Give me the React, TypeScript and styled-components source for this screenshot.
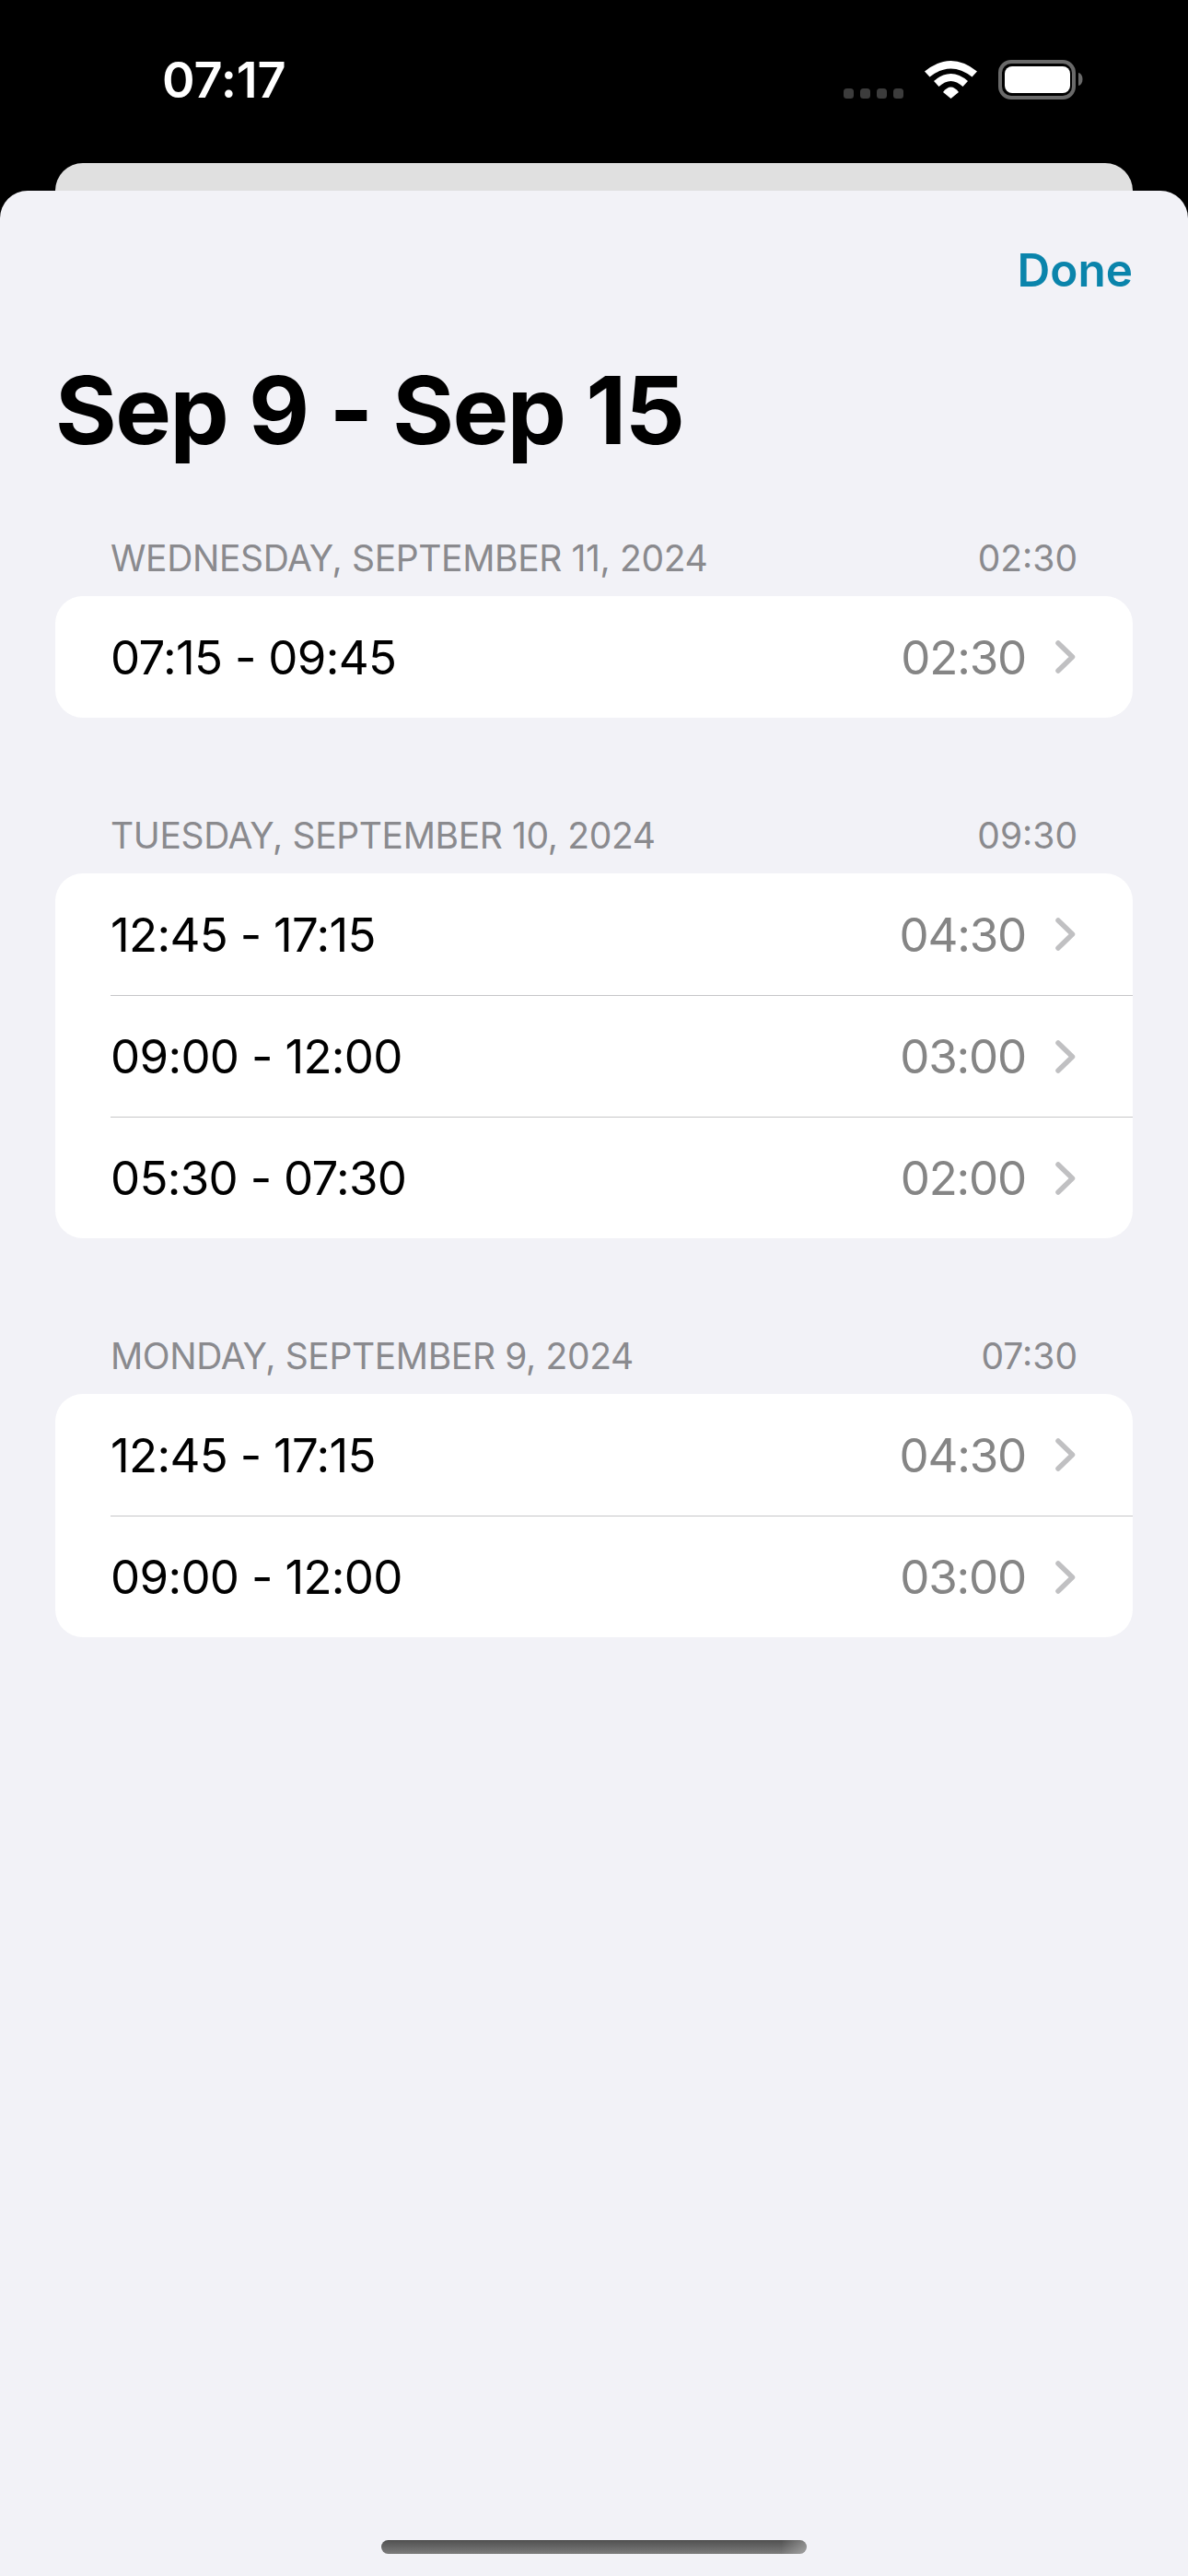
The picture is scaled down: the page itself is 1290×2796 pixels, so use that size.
import React from "react";
import styled, { createGlobalStyle } from "styled-components";

const Global = createGlobalStyle`
  html, body { margin: 0; padding: 0; background: #000; }
  body { font-family: Inter, "Liberation Sans", sans-serif; }
`;

const Screen = styled.div`
  width: 1290px;
  height: 2796px;
  background: #000;
  display: flex;
  flex-direction: column;
  overflow: hidden;
  position: relative;
`;

const StatusBar = styled.div`
  height: 177px;
  flex: none;
  display: flex;
  align-items: flex-start;
  justify-content: space-between;
  box-sizing: border-box;
  padding: 60px 113px 0 176px;
`;

const Clock = styled.div`
  color: #fff;
  font-size: 54px;
  font-weight: 600;
  line-height: 54px;
  letter-spacing: -0.1px;
`;

const StatusIcons = styled.svg`
  display: block;
  margin-top: 5px;
  flex: none;
`;

const BackSheet = styled.div`
  height: 40px;
  flex: none;
  margin: 0 60px -10px;
  background: #e0e0e0;
  border-radius: 30px 30px 0 0;
`;

const Sheet = styled.div`
  flex: 1;
  position: relative;
  background: #f2f2f7;
  border-radius: 30px 30px 0 0;
  box-sizing: border-box;
  padding: 0 60px;
  display: flex;
  flex-direction: column;
`;

const TopBar = styled.div`
  height: 115px;
  display: flex;
  align-items: flex-end;
  justify-content: flex-end;
`;

const Done = styled.button`
  border: 0;
  background: none;
  padding: 0;
  font: 600 49.5px/58px Inter, "Liberation Sans", sans-serif;
  color: #0a84ab;
`;

const Title = styled.h1`
  margin: 63px 0 0;
  font-size: 102px;
  font-weight: 700;
  line-height: 120px;
  letter-spacing: -1.5px;
  color: #000;
`;

const Sections = styled.div`
  margin-top: 78px;
  display: flex;
  flex-direction: column;
  gap: 105px;
`;

const SectionHeader = styled.div`
  height: 64px;
  box-sizing: border-box;
  padding: 0 60px;
  display: flex;
  justify-content: space-between;
  align-items: flex-start;
  font-size: 39px;
  line-height: 46px;
  color: #8a8a8e;
`;

const DateLabel = styled.span`
  letter-spacing: -0.37px;
`;

const Card = styled.div`
  background: #fff;
  border-radius: 30px;
  overflow: hidden;
`;

const Row = styled.div`
  height: 132px;
  box-sizing: border-box;
  margin-left: 60px;
  padding-right: 62px;
  display: flex;
  align-items: center;
  & + & {
    border-top: 1px solid #c6c6c8;
  }
`;

const Range = styled.div`
  flex: 1;
  font-size: 51px;
  letter-spacing: -0.7px;
  color: #000;
`;

const Duration = styled.div`
  font-size: 51px;
  letter-spacing: -1.2px;
  color: #858585;
  margin-right: 32px;
`;

const Chevron = styled.svg`
  display: block;
  flex: none;
`;

const HomeBar = styled.div`
  position: absolute;
  left: 414px;
  top: 2757px;
  width: 462px;
  height: 15px;
  border-radius: 8px;
  background: linear-gradient(to right, rgba(255, 255, 255, 0) 94%, rgba(255, 255, 255, 0.3)),
    linear-gradient(180deg, #505050, #7c7c7c);
`;

type Entry = { range: string; duration: string };
type Section = { date: string; total: string; entries: Entry[] };

const data: Section[] = [
  { date: "WEDNESDAY, SEPTEMBER 11, 2024", total: "02:30", entries: [{ range: "07:15 - 09:45", duration: "02:30" }] },
  {
    date: "TUESDAY, SEPTEMBER 10, 2024",
    total: "09:30",
    entries: [
      { range: "12:45 - 17:15", duration: "04:30" },
      { range: "09:00 - 12:00", duration: "03:00" },
      { range: "05:30 - 07:30", duration: "02:00" },
    ],
  },
  {
    date: "MONDAY, SEPTEMBER 9, 2024",
    total: "07:30",
    entries: [
      { range: "12:45 - 17:15", duration: "04:30" },
      { range: "09:00 - 12:00", duration: "03:00" },
    ],
  },
];

export default function App() {
  return (
    <Screen>
      <Global />
      <StatusBar>
        <Clock>07:17</Clock>
        <StatusIcons width="261" height="43" viewBox="0 0 261 43">
          <g fill="#3c3c3c">
            <rect x="0" y="31" width="11" height="11" rx="3.5" />
            <rect x="18" y="31" width="11" height="11" rx="3.5" />
            <rect x="36" y="31" width="11" height="11" rx="3.5" />
            <rect x="54" y="31" width="11" height="11" rx="3.5" />
          </g>
          <g fill="#fff">
            <path d="M88 12.5 Q116.5 -10.5 145 12.5 L139.5 18.5 Q116.5 0.5 93.5 18.5 Z" />
            <path d="M98 23 Q116.5 7 135 23 L129.5 29 Q116.5 17 103.5 29 Z" />
            <path d="M108 35 Q116.5 24 125 35 L116.5 42 Z" />
          </g>
          <rect x="170" y="2" width="80" height="39" rx="12" fill="none" stroke="#6a6a6a" strokeWidth="4" />
          <rect x="175" y="7" width="71" height="29" rx="8" fill="#fff" />
          <path d="M255 14 C 261 15, 261 27, 255 28 Z" fill="#6a6a6a" />
        </StatusIcons>
      </StatusBar>
      <BackSheet />
      <Sheet>
        <TopBar>
          <Done>Done</Done>
        </TopBar>
        <Title>Sep 9 - Sep 15</Title>
        <Sections>
          {data.map((s) => (
            <div key={s.date}>
              <SectionHeader>
                <DateLabel>{s.date}</DateLabel>
                <span>{s.total}</span>
              </SectionHeader>
              <Card>
                {s.entries.map((e) => (
                  <Row key={e.range}>
                    <Range>{e.range}</Range>
                    <Duration>{e.duration}</Duration>
                    <Chevron width="22" height="36" viewBox="0 0 22 36">
                      <path d="M3 3 L18.5 18 L3 33" fill="none" stroke="#c0c0c2" strokeWidth="5.5" strokeLinecap="round" strokeLinejoin="round" />
                    </Chevron>
                  </Row>
                ))}
              </Card>
            </div>
          ))}
        </Sections>
      </Sheet>
      <HomeBar />
    </Screen>
  );
}
